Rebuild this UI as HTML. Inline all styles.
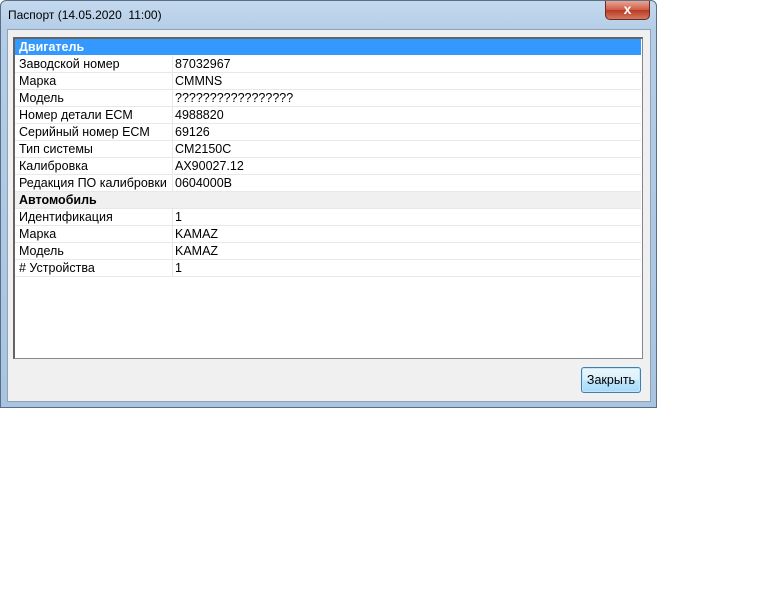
<!DOCTYPE html>
<html><head><meta charset="utf-8"><style>
body{margin:0;width:768px;height:614px;background:#fff;position:relative;overflow:hidden;font-family:"Liberation Sans",sans-serif;font-size:12px;color:#000}
.win{position:absolute;left:0;top:0;width:655px;height:406px;border:1px solid #5a6f86;border-radius:6px 6px 0 0;background:linear-gradient(#c4d9ee,#b4cde6 30px,#a9c4e0);}
.title{position:absolute;left:7px;top:7px;font-size:12px;color:#000}
.close{position:absolute;left:604px;top:0;width:45px;height:19px;border:1px solid #6b2a24;border-top:none;border-radius:0 0 5px 5px;background:linear-gradient(#e8a596,#cf5a45 50%,#b83a24 51%,#d47a5c);box-sizing:border-box;color:#fff;font-weight:bold;text-align:center;line-height:17px;font-size:14px}
.client{position:absolute;left:6px;top:28px;width:642px;height:371px;background:#f0f0f0;border:1px solid #8ea3b8}
.list{position:absolute;left:5px;top:7px;width:627px;height:319px;background:#fff;border:1px solid #828790;border-left:2px solid #646464;border-top:2px solid #646464}
.row{position:absolute;left:0;width:626px;height:16px;border-bottom:1px solid #e8e8e8;line-height:16px;font-size:12.5px}
.row span{position:absolute;left:4px}
.row b{position:absolute;left:160px;font-weight:normal}
.row i{position:absolute;left:157px;top:0;height:17px;border-left:1px solid #e8e8e8}
.hd{background:#3399ff;color:#fff;font-weight:bold;border-bottom:none}
.hd2{background:#f0f0f0;font-weight:bold}
.btn{position:absolute;left:573px;top:337px;width:60px;height:26px;box-sizing:border-box;border:1px solid #3c7fb1;border-radius:3px;background:linear-gradient(#eaf6fd,#d9f0fc 50%,#bee6fd 51%,#a7d9f5);text-align:center;line-height:24px;box-shadow:inset 0 0 0 1px #c4e6f8;font-size:12.5px}
</style></head><body>
<div class="win">
<div class="title">Паспорт (14.05.2020&nbsp; 11:00)</div>
<div class="close">x</div>
<div class="client">
<div class="list">
<div class="row hd" style="top:0"><span>Двигатель</span></div>
<div class="row" style="top:17px"><span>Заводской номер</span><i></i><b>87032967</b></div>
<div class="row" style="top:34px"><span>Марка</span><i></i><b>CMMNS</b></div>
<div class="row" style="top:51px"><span>Модель</span><i></i><b>?????????????????</b></div>
<div class="row" style="top:68px"><span>Номер детали ECM</span><i></i><b>4988820</b></div>
<div class="row" style="top:85px"><span>Серийный номер ECM</span><i></i><b>69126</b></div>
<div class="row" style="top:102px"><span>Тип системы</span><i></i><b>CM2150C</b></div>
<div class="row" style="top:119px"><span>Калибровка</span><i></i><b>AX90027.12</b></div>
<div class="row" style="top:136px"><span>Редакция ПО калибровки</span><i></i><b>0604000B</b></div>
<div class="row hd2" style="top:153px"><span>Автомобиль</span></div>
<div class="row" style="top:170px"><span>Идентификация</span><i></i><b>1</b></div>
<div class="row" style="top:187px"><span>Марка</span><i></i><b>KAMAZ</b></div>
<div class="row" style="top:204px"><span>Модель</span><i></i><b>KAMAZ</b></div>
<div class="row" style="top:221px"><span># Устройства</span><i></i><b>1</b></div>
</div>
<div class="btn">Закрыть</div>
</div>
</div>
</body></html>
